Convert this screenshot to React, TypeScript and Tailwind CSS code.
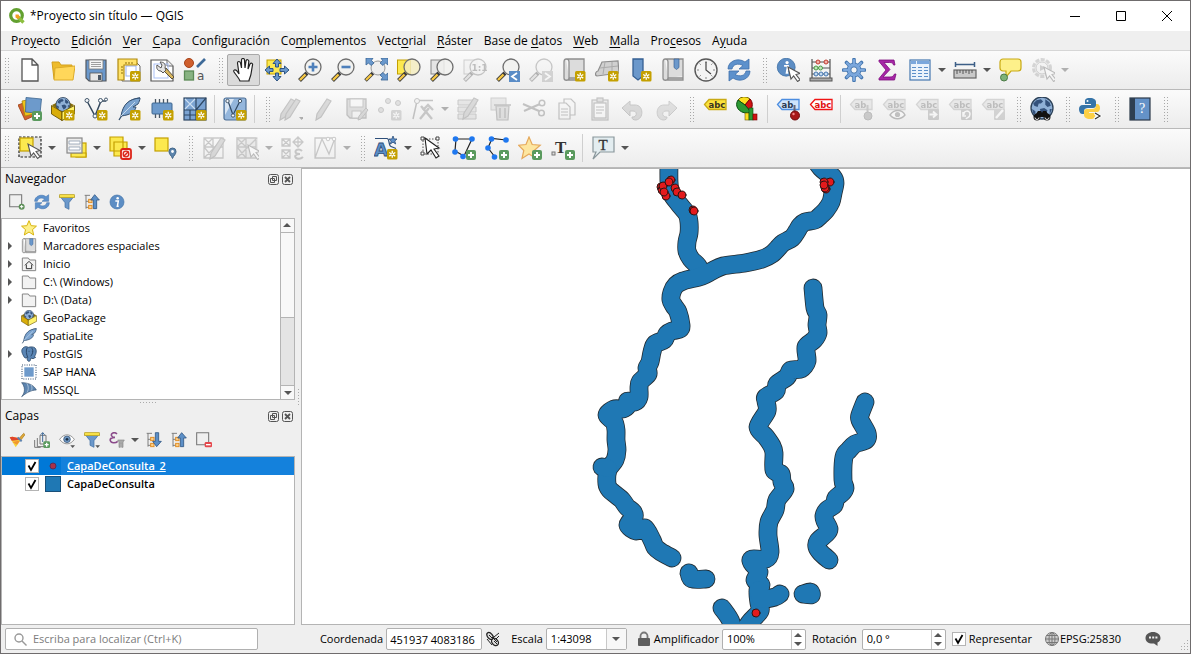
import React from "react";

type IconProps = { children: React.ReactNode; off?: boolean; size?: number };

function Icon({ children, off, size = 24 }: IconProps) {
  return (
    <svg
      width={size}
      height={size}
      viewBox="0 0 24 24"
      fill="none"
      aria-hidden="true"
      className={off ? "shrink-0 opacity-35 grayscale" : "shrink-0"}
    >
      {children}
    </svg>
  );
}

/* ---------- shared icon pieces ---------- */

const StarBadge = () => (
  <g>
    <rect x="13" y="13" width="10.500" height="10.500" rx="1.500" fill="#c4a000" />
    <path d="M18.250 14.800v7M15.200 16.500l6.100 3.600M21.300 16.500l-6.100 3.600" stroke="#fff" strokeWidth="1.300" />
    <circle cx="18.250" cy="18.300" r=".9" fill="#c4a000" />
  </g>
);

const PlusBadge = () => (
  <g>
    <rect x="14" y="14" width="10" height="10" rx="2" fill="#5a9a5e" />
    <path d="M19 16v6M16 19h6" stroke="#fff" strokeWidth="2" />
  </g>
);

const Lens = ({ children, fill = "#f1f1ef" }: { children?: React.ReactNode; fill?: string }) => (
  <g>
    <path d="M9 15L1.500 22.500" stroke="#3c3c3c" strokeWidth="4" />
    <path d="M7.500 16.500L2 22" stroke="#f7c843" strokeWidth="2.400" />
    <circle cx="15" cy="9" r="8" fill={fill} fillOpacity="0.85" stroke="#6e6e6e" strokeWidth="1.300" />
    {children}
  </g>
);

const Cursor = ({ x = 10, y = 9 }: { x?: number; y?: number }) => (
  <path
    transform={`translate(${x} ${y})`}
    d="M0 0l3 12 2.600-3 4 5.500 2.400-1.800-4-5.200 4-1z"
    fill="#fff"
    stroke="#555"
    strokeWidth="1.100"
  />
);

const Tag = ({
  text,
  fill,
  stroke,
  color,
}: {
  text: string;
  fill: string;
  stroke: string;
  color: string;
}) => (
  <g>
    <path d="M1.500 7.500L6 2.500h17v10H6z" fill={fill} stroke={stroke} strokeWidth="1.300" />
    <text x="5.500" y="10.600" fontSize="8.500" fontWeight="700" fontFamily="DejaVu Sans, sans-serif" fill={color}>
      {text}
    </text>
  </g>
);

const Globe = ({ cx, cy, r }: { cx: number; cy: number; r: number }) => (
  <g transform={`translate(${cx} ${cy}) scale(${r / 10})`}>
    <circle r="10" fill="#8fb0d6" stroke="#2d4259" strokeWidth="1.200" />
    <path
      d="M-8-4l3-3 4-1 2 2-2 2-2 0-1 3-3-1zM3-8l4 3 1 3-3 1-2-2 0-3zM-2 1l4-1 3 2-1 3-3 2-2-3zM-9 1l3 2 0 3-2-1zM7 1l2 0-2 5z"
      fill="#34527c"
    />
  </g>
);

const Refresh = () => (
  <g>
    <path d="M1 11C1 3 11-1 18 4l4-3v10h-10l4-3.500C11 5 6 6 5 11z" fill="#5d91cc" stroke="#3f70ab" strokeWidth=".8" />
    <path d="M23 13c0 8-10 12-17 7l-4 3V13h10l-4 3.500c5 2.500 10 1.500 11-3.500z" fill="#5d91cc" stroke="#3f70ab" strokeWidth=".8" />
  </g>
);

const Pencil = ({ x = 0, y = 0 }: { x?: number; y?: number }) => (
  <path
    transform={`translate(${x} ${y})`}
    d="M15 2l4 2-10 16-5 3 1-6z"
    fill="#b9a48a"
    stroke="#6b6b6b"
    strokeWidth="1.200"
  />
);

const Scroll = () => (
  <path
    d="M4 1h18v19H7M4 1c-2 0-2 2-2 3v16c0 3 5 3 5 0V4c0-2-1-3-3-3M7 20v2h15v-4"
    fill="#dcdcdc"
    stroke="#8e8e8e"
    strokeWidth="1.300"
  />
);

const VLine = () => (
  <g>
    <path d="M3 4l8 15 6-15h5" stroke="#33475c" strokeWidth="1.500" />
    <g fill="#f4f7fa" stroke="#44586c">
      <circle cx="3" cy="3.500" r="2" />
      <circle cx="16.500" cy="3.500" r="2" />
      <circle cx="22" cy="2.500" r="1.500" />
      <circle cx="11" cy="19" r="2" />
    </g>
  </g>
);

const Feather = () => (
  <g>
    <path d="M23 1C13 2 6 8 5 18l-3 5" stroke="#34506f" strokeWidth="1.300" />
    <path d="M23 1C12 2 6 7 4 19c9-1 14-4 15-9l-3 0 5-3c1-2 2-4 2-6z" fill="#7ba3cf" stroke="#34506f" strokeWidth="1" />
    <path d="M4 19L18 5" stroke="#c6d9ec" />
  </g>
);

const Package = () => (
  <g>
    <path d="M1 8l6-3h10l6 3-12 8z" fill="#8a6f08" />
    <Globe cx={12} cy={7.500} r={7} />
    <path d="M.5 8.500L11 15v8.500L.5 17z" fill="#d9ad0a" stroke="#6a5400" strokeWidth=".9" />
    <path d="M23.500 8.500L11 15v8.500L23.500 17z" fill="#fff36a" stroke="#6a5400" strokeWidth=".9" />
  </g>
);

const Bookmark = ({ x, y, s = 1 }: { x: number; y: number; s?: number }) => (
  <path
    transform={`translate(${x} ${y}) scale(${s})`}
    d="M0 0h10v17l-5 4-5-4z"
    fill="#6b98cb"
    stroke="#355f92"
    strokeWidth="1.300"
  />
);

const Funnel = () => (
  <g>
    <path d="M1 3h22l-8 10v10l-6-3v-7z" fill="#6b98cb" stroke="#3d6a9e" />
    <rect x="1" y="1" width="22" height="4.500" fill="#f7e048" stroke="#b59a12" />
  </g>
);

const Tree = ({ up }: { up: boolean }) => (
  <g>
    <path d="M1 2h8M3 2v20M3 11h6M3 20h6" stroke="#777" strokeWidth="1.400" />
    <rect x="7" y="8" width="5" height="5" fill="#fcd08a" stroke="#e08a1e" strokeWidth="1.400" />
    <rect x="7" y="17" width="5" height="5" fill="#fcd08a" stroke="#e08a1e" strokeWidth="1.400" />
    <path
      d={up ? "M16 1l7 8h-4v13h-5V9h-4z" : "M16 22l7-8h-4V1h-5v13h-4z"}
      fill="#5c8fc7"
      stroke="#2d5482"
      strokeWidth="1.200"
    />
  </g>
);

const Info = () => (
  <g>
    <circle cx="12" cy="12" r="10.500" fill="#5c8dc4" stroke="#4172a8" />
    <circle cx="13" cy="6.500" r="1.900" fill="#fff" />
    <path d="M9.500 10.500H14l-1.500 8h2" stroke="#fff" strokeWidth="2.200" />
  </g>
);

const Mesh = () => (
  <path
    d="M2 2h9v9H2zM2 2l9 9M11 2l-9 9M11 2h10v9H11zM2 11h9v11H2zM2 22L22 2M11 11h10v11H11zM2 11l9 11"
    stroke="#777"
    strokeWidth="1.300"
  />
);

/* ---------- toolbar icons ---------- */

const icons: Record<string, React.ReactNode> = {
  "Nuevo proyecto": <path d="M4 1h10l6 6v16H4zM14 1v6h6" fill="#fff" stroke="#555" strokeWidth="1.300" />,
  "Abrir proyecto": (
    <g>
      <path d="M1 4h7l2 3h11v14H3z" fill="#eebb2a" stroke="#d3a01c" />
      <path d="M4 10l20-2-2 14H3z" fill="#ffd75a" stroke="#dcab28" />
    </g>
  ),
  "Guardar proyecto": (
    <g>
      <path d="M2 2h20v21H5l-3-3z" fill="#6a98cc" stroke="#54595f" strokeWidth="1.200" />
      <rect x="5" y="2" width="14" height="9" fill="#f6f6f6" stroke="#777" strokeWidth=".8" />
      <path d="M7 4.500h10M7 6.500h10M7 8.500h10" stroke="#888" strokeWidth=".8" />
      <rect x="6" y="15" width="12" height="8" fill="#e6e6e6" stroke="#555" strokeWidth=".8" />
      <rect x="14" y="17" width="3" height="5" fill="#4a5663" />
    </g>
  ),
  "Nueva composición": (
    <g>
      <path d="M5 4h14l4 4v15H5z" fill="#fff" stroke="#666" />
      <rect x="9" y="8" width="10" height="10" fill="#fff" stroke="#9ab4f2" />
      <path d="M1 1h19v6H7v15H1z" fill="#ffe26a" stroke="#b08a10" strokeWidth="1.200" />
      <path d="M9 4v2M12 4v2M15 4v2M4 9h2M4 12h2M4 15h2" stroke="#8b6c0a" />
      <StarBadge />
    </g>
  ),
  "Administrador de composiciones": (
    <g>
      <path d="M1 2h16l6 6v15H1z" fill="#fff" stroke="#555" strokeWidth="1.200" />
      <path d="M17 2v6h6" fill="#eee" stroke="#666" />
      <rect x="4" y="6" width="14" height="14" stroke="#a9c0f5" />
      <path d="M13 12l9 9 2-2-8-9z" fill="#d8b65d" stroke="#5d513a" />
      <path d="M7 7l4 3 1-3-2-3c4 0 6 2 5 6l1 2-3 3-2-2C8 13 6 11 7 7z" fill="#e4e4e4" stroke="#555" />
    </g>
  ),
  "Administrador de estilos": (
    <g>
      <circle cx="6" cy="5" r="4.500" fill="#cf5f2d" stroke="#a6431a" />
      <path d="M22 1L14 9" stroke="#3e6a98" strokeWidth="2.600" />
      <rect x="1.500" y="13" width="9" height="9" fill="#88b382" stroke="#5c8a56" strokeWidth="1.300" />
      <text x="14" y="22" fontSize="12" fontFamily="DejaVu Sans, sans-serif" fill="#555">a</text>
    </g>
  ),
  Desplazar: (
    <path
      d="M8 23c-1-3-4-6-6-9-1-2 1-3 3-1l2 3L5.500 5c0-2 2.500-2 3 0l1 5L9.500 2c0-2 3-2 3 0l.5 8 1-7c.5-2 3-1.500 2.800.5L16 11l2-5c1-1.500 3-.8 2.500 1L19 16c-.5 3-2 5-2 7z"
      fill="#fff"
      stroke="#222"
      strokeWidth="1.200"
    />
  ),
  "Desplazar a la selección": (
    <g>
      <rect x="2" y="2" width="14" height="14" fill="#fce94f" stroke="#c4a000" />
      <path
        d="M12 1l4 4.500h-2.500v3.500h-3V5.500H8zM12 23l-4-4.500h2.500V15h3v3.500H16zM0 12l4.500-4v2.500H8v3H4.500V16zM24 12l-4.500-4v2.500H15v3h4.500V16z"
        fill="#6a98cc"
        stroke="#2d5482"
      />
    </g>
  ),
  "Acercar zum": (
    <Lens>
      <path d="M15 4.500v9M10.500 9h9" stroke="#4e80bb" strokeWidth="2.600" />
    </Lens>
  ),
  "Alejar zum": (
    <Lens>
      <path d="M10.500 9h9" stroke="#4e80bb" strokeWidth="2.600" />
    </Lens>
  ),
  "Zum general": (
    <g>
      <path d="M9 15L1.500 22.500" stroke="#3c3c3c" strokeWidth="3.600" />
      <path d="M7.500 16.500L2 22" stroke="#f7c843" strokeWidth="2.200" />
      <circle cx="14" cy="10" r="7" fill="#eee" stroke="#999" />
      <path
        d="M2 0h7L7.500 2.500 10 5 7 7.500 4.500 5 2 7zM24 0h-7l1.500 2.500L16 5l3 2.500L21.500 5 24 7zM24 22h-7l1.500-2.500L16 17l3-2.500 2.500 2.500 2.500-2z"
        fill="#6a98cc"
        stroke="#3a6494"
        strokeWidth=".8"
      />
    </g>
  ),
  "Zum a la selección": (
    <g>
      <rect x="0.500" y="2" width="13" height="14" fill="#fce94f" stroke="#c4a000" />
      <Lens fill="#f3ecc0" />
    </g>
  ),
  "Zum a la capa": (
    <g>
      <rect x="1" y="2" width="13" height="14" fill="#e4e4e4" stroke="#888" />
      <Lens />
    </g>
  ),
  "Zum a resolución nativa": (
    <g>
      <rect x="1" y="2" width="13" height="14" fill="#eee" stroke="#888" />
      <Lens>
        <text x="8.500" y="12.500" fontSize="9" fontWeight="700" fontFamily="DejaVu Sans, sans-serif" fill="#555">1:1</text>
      </Lens>
    </g>
  ),
  "Zum anterior": (
    <g>
      <Lens />
      <rect x="13" y="13" width="11" height="11" fill="#5a8cc6" />
      <path d="M21 15l-5 3.500 5 3.500" stroke="#fff" strokeWidth="1.800" />
    </g>
  ),
  "Zum siguiente": (
    <g>
      <Lens />
      <rect x="13" y="13" width="11" height="11" fill="#999" />
      <path d="M16 15l5 3.500-5 3.500" stroke="#fff" strokeWidth="1.800" />
    </g>
  ),
  "Nueva vista de mapa": (
    <g>
      <Scroll />
      <StarBadge />
    </g>
  ),
  "Nueva vista 3D": (
    <g>
      <path d="M7 4l16-1 1 12-22 3c-3-1-1-5 1-5z" fill="#d0d0d0" stroke="#8e8e8e" strokeWidth="1.200" />
      <path d="M5 10l18-2M10 4l-2 12M17 4v12" stroke="#aaa" />
      <StarBadge />
    </g>
  ),
  "Nuevo marcador espacial": (
    <g>
      <Bookmark x={5} y={1} />
      <StarBadge />
    </g>
  ),
  "Mostrar marcadores espaciales": (
    <g>
      <Scroll />
      <Bookmark x={13} y={1} s={0.5} />
    </g>
  ),
  "Controlador temporal": (
    <g>
      <circle cx="12" cy="12" r="11" fill="#f4f4f4" stroke="#585858" strokeWidth="1.400" />
      <path
        d="M12 3v2M12 19v2M3 12h2M19 12h2M5.600 5.600l1.200 1.200M17.200 17.200l1.200 1.200M5.600 18.400l1.200-1.200M17.200 6.800l1.200-1.200"
        stroke="#888"
      />
      <path d="M12 4v8l5 4" stroke="#444" strokeWidth="1.200" />
    </g>
  ),
  Actualizar: <Refresh />,
  "Identificar objetos": (
    <g>
      <g transform="translate(0 -1) scale(.85)">
        <Info />
      </g>
      <Cursor x={12} y={9} />
    </g>
  ),
  "Calculadora de campos": (
    <g>
      <path d="M3 1v20M21 1v20M3 4h18M3 10h18M3 16h18" stroke="#555" strokeWidth="1.200" />
      <rect x="1" y="20" width="22" height="3" fill="#aaa" stroke="#555" />
      <g fill="#f3b0a8" stroke="#c23b30">
        <circle cx="9" cy="4" r="2" />
        <circle cx="17" cy="4" r="2" />
      </g>
      <g fill="#c2e6bd" stroke="#4c9b45">
        <circle cx="7" cy="10" r="2" />
        <circle cx="11.500" cy="10" r="2" />
      </g>
      <g fill="#c5dbf2" stroke="#4577b0">
        <circle cx="7" cy="16" r="2" />
        <circle cx="12" cy="16" r="2" />
        <circle cx="17" cy="16" r="2" />
      </g>
    </g>
  ),
  "Caja de herramientas de procesos": (
    <g>
      <path
        d="M12 1.500v21M1.500 12h21M4.500 4.500l15 15M19.500 4.500l-15 15"
        stroke="#4577b0"
        strokeWidth="3.600"
        strokeLinecap="round"
      />
      <circle cx="12" cy="12" r="7" fill="#7ba7dc" stroke="#4577b0" />
      <path
        d="M12 2v20M2 12h20M5 5l14 14M19 5L5 19"
        stroke="#7ba7dc"
        strokeWidth="2.200"
        strokeLinecap="round"
      />
      <circle cx="12" cy="12" r="3.200" fill="#f4f4f4" stroke="#4577b0" />
    </g>
  ),
  "Resumen estadístico": (
    <path
      d="M4 2h15l1 5h-1.500c-.5-2-1.500-2.500-4-2.500H9l6 7-7 7.500h7c2.500 0 3.500-1 4.500-3H21l-1.500 6H4v-1.500L11 12 4 3.500z"
      fill="#a626a6"
      stroke="#7d0d7d"
      strokeWidth=".8"
    />
  ),
  "Abrir tabla de atributos": (
    <g>
      <rect x="2" y="2" width="20" height="20" fill="#eaf2fb" stroke="#4577b0" strokeWidth="1.200" />
      <path d="M3 4.500h5M9 4.500h12" stroke="#7ba7dc" strokeWidth="3" />
      <path d="M4 9.500h4M4 12.500h4M4 15.500h4M4 18.500h4M10 9.500h4M10 12.500h4M10 15.500h4M10 18.500h4M16 9.500h4M16 12.500h4M16 15.500h4M16 18.500h4" stroke="#5b8fca" strokeWidth="1.100" />
    </g>
  ),
  "Medir línea": (
    <g>
      <path d="M2 6.500h20M2.500 4v5M21.500 4v5" stroke="#3d5f87" strokeWidth="1.500" />
      <rect x="1" y="12" width="22" height="8" fill="#c9c9c9" stroke="#666" strokeWidth="1.200" />
      <path d="M4 12v4M7 12v3M10 12v4M13 12v3M16 12v4M19 12v3" stroke="#555" />
    </g>
  ),
  "Mostrar avisos del mapa": (
    <g>
      <path
        d="M5 1h15a3 3 0 0 1 3 3v6a3 3 0 0 1-3 3h-7l-5 6 0-6H5a3 3 0 0 1-3-3V4a3 3 0 0 1 3-3z"
        fill="#fdf08a"
        stroke="#c9aa15"
        strokeWidth="1.200"
      />
      <circle cx="6" cy="19.500" r="3.500" fill="#7fb379" stroke="#4b7a46" />
    </g>
  ),
  "Ejecutar acción del objeto": (
    <g>
      <circle cx="11" cy="10" r="8.500" fill="#ddd" stroke="#999" strokeWidth="3" strokeDasharray="4 1.500" />
      <circle cx="11" cy="10" r="6" fill="#f0f0f0" stroke="#888" />
      <path d="M9 7l6 3-6 3z" fill="#888" />
      <Cursor x={13} y={9} />
    </g>
  ),
  "Administrador de fuentes de datos": (
    <g>
      <path d="M0 8l7 15 11-5L8 5z" fill="#d2622d" stroke="#9b3d12" strokeWidth=".8" />
      <path d="M4 4l3 15 13-3L9 3z" fill="#f0c419" stroke="#a8870c" strokeWidth=".8" />
      <path d="M8 .5l15.500 1.500-1.500 14.500L7.500 15z" fill="#6d9acb" stroke="#3e668f" strokeWidth=".8" />
      <PlusBadge />
    </g>
  ),
  "Nueva capa GeoPackage": (
    <g>
      <Package />
      <StarBadge />
    </g>
  ),
  "Nueva capa de archivo shape": (
    <g>
      <VLine />
      <StarBadge />
    </g>
  ),
  "Nueva capa SpatiaLite": (
    <g>
      <Feather />
      <StarBadge />
    </g>
  ),
  "Nueva capa borrador temporal": (
    <g>
      <path d="M5.500 2v19M9.500 2v19M13.500 2v19M17.500 2v19" stroke="#4a5663" strokeWidth="1.300" />
      <rect x="2" y="6" width="20" height="11" rx="1" fill="#6d9acb" stroke="#3e668f" />
      <StarBadge />
    </g>
  ),
  "Nueva capa de malla": (
    <g>
      <rect x="1" y="1" width="22" height="22" fill="#7ba3d2" stroke="#2f4864" strokeWidth="1.200" />
      <path d="M1 13h22M13 1v22M13 13L23 1M7 13v10M1 18h12" stroke="#2f4864" strokeWidth="1.200" />
      <path d="M2 2l10 10M12 2L2 12" stroke="#cddff2" strokeWidth="1.100" />
      <StarBadge />
    </g>
  ),
  "Nueva capa virtual": (
    <g>
      <rect x="1" y="1" width="22" height="22" rx="2" fill="#94b6dc" stroke="#4d6f96" strokeWidth="1.200" />
      <path d="M2 2h9L2 18z" fill="#d9e6f4" />
      <path d="M5 4l5 14 7-14" stroke="#2f4864" strokeWidth="1.200" />
      <g fill="#f4f7fa" stroke="#44586c">
        <circle cx="4.500" cy="4" r="1.700" />
        <circle cx="17" cy="4" r="1.700" />
        <circle cx="10" cy="18.500" r="1.700" />
      </g>
      <StarBadge />
    </g>
  ),
  "Ediciones actuales": (
    <g>
      <Pencil x={-3} />
      <Pencil x={2} />
      <path d="M20 20h5l-2.500 3z" fill="#333" />
    </g>
  ),
  "Conmutar edición": <Pencil />,
  "Guardar cambios de la capa": (
    <g>
      <path d="M2 2h19v19H5l-3-3z" fill="#b5b5b5" stroke="#666" strokeWidth="1.300" />
      <rect x="5" y="2" width="13" height="8" fill="#f6f6f6" stroke="#777" />
      <rect x="7" y="14" width="9" height="7" fill="#f0f0f0" stroke="#777" />
      <path d="M21 11l2 2-7 9-3 1 1-4z" fill="#b9a48a" stroke="#666" />
    </g>
  ),
  "Añadir punto": (
    <g>
      <circle cx="10" cy="4" r="2.500" fill="#bbb" stroke="#777" />
      <circle cx="3" cy="13" r="2.500" fill="#bbb" stroke="#777" />
      <circle cx="20" cy="6" r="2.500" fill="#bbb" stroke="#777" />
      <StarBadge />
    </g>
  ),
  "Herramienta de vértices": (
    <g>
      <path d="M2 22L6 4M6 3.500h16" stroke="#666" strokeWidth="1.500" />
      <circle cx="6" cy="4" r="2.500" fill="#eee" stroke="#666" />
      <path d="M10 9l11 13M18 11L9 22" stroke="#777" strokeWidth="2.400" />
      <path d="M12 13l5-5 5 5" stroke="#777" strokeWidth="2.400" />
    </g>
  ),
  "Modificar atributos": (
    <g>
      <path d="M2 3h18v5H2zM2 10h18v5H2zM2 17h18v5H2z" fill="#c8cfae" stroke="#777" />
      <Pencil x={3} y={-1} />
    </g>
  ),
  "Borrar lo seleccionado": (
    <g>
      <rect x="2" y="1" width="15" height="12" fill="#d0d0b0" stroke="#888" />
      <path d="M7 9h13l-1 14H8z" fill="#d8b0b0" stroke="#8b5b5b" strokeWidth="1.200" />
      <path d="M5 8h17M11 11v10M16 11v10" stroke="#8b5b5b" strokeWidth="1.500" />
    </g>
  ),
  "Cortar objetos": (
    <g>
      <path d="M1 7l16 7M2 14l16-7" stroke="#666" strokeWidth="2" />
      <circle cx="20" cy="6" r="2.800" stroke="#666" strokeWidth="1.500" />
      <circle cx="19.500" cy="16" r="2.800" stroke="#666" strokeWidth="1.500" />
    </g>
  ),
  "Copiar objetos": (
    <g fill="#f5f5f5" stroke="#666" strokeWidth="1.200">
      <path d="M9 2h7l4 4v12H9z" />
      <path d="M4 6h7l4 4v12H4z" />
      <path d="M6 12h7M6 15h7M6 18h7" />
    </g>
  ),
  "Pegar objetos": (
    <g stroke="#666" strokeWidth="1.200">
      <rect x="4" y="3" width="16" height="20" fill="#d9d9d9" />
      <rect x="6" y="6" width="12" height="15" fill="#fafafa" />
      <rect x="9" y="1" width="6" height="4" fill="#bbb" />
      <path d="M8 10h8M8 13h8M8 16h6" />
    </g>
  ),
  Deshacer: (
    <path d="M9 4v4h5c9 0 9 14 1 15-3 0-4-1-4-3 5 1 6-6 1-6H9v5L1 11z" fill="#b7a6a0" stroke="#7d6f6a" />
  ),
  Rehacer: (
    <path d="M15 4v4h-5c-9 0-9 14-1 15 3 0 4-1 4-3-5 1-6-6-1-6h3v5l8-8z" fill="#b3b9b0" stroke="#7c857a" />
  ),
  "Opciones de etiquetado": <Tag text="abc" fill="#fbe23c" stroke="#c9aa15" color="#3a3320" />,
  "Opciones de diagrama": (
    <g>
      <path d="M9 8L2 3a8 8 0 0 1 12-1z" fill="#fce020" stroke="#6b5d00" />
      <path d="M9 8l5-6c3 3 3 8 0 12z" fill="#d11313" stroke="#700" />
      <path d="M9 8L2 3c-4 6 1 13 9 13 1 0 3-1 3-2z" fill="#2c9a34" stroke="#0a4f10" />
      <rect x="9" y="16" width="4" height="7" fill="#fce020" stroke="#6b5d00" strokeWidth=".6" />
      <rect x="13" y="11" width="4" height="12" fill="#2c9a34" stroke="#0a4f10" strokeWidth=".6" />
      <rect x="17" y="17" width="4" height="6" fill="#d11313" stroke="#700" strokeWidth=".6" />
    </g>
  ),
  "Resaltar etiquetas fijadas": (
    <g>
      <Tag text="ab" fill="#cfe4fb" stroke="#4c8de0" color="#2b3950" />
      <path d="M18.500 8v10" stroke="#667" strokeWidth="2" />
      <circle cx="19" cy="18.500" r="4.500" fill="#a81818" stroke="#700c0c" />
      <circle cx="17.500" cy="17" r="1.200" fill="#e88" />
    </g>
  ),
  "Conmutar etiquetas no ubicadas": <Tag text="abc" fill="#fff" stroke="#f01414" color="#e01010" />,
  "Fijar etiquetas": (
    <g>
      <Tag text="ab" fill="#d6d2b0" stroke="#999" color="#555" />
      <path d="M18.500 8v10" stroke="#777" strokeWidth="2" />
      <circle cx="19" cy="19" r="4" fill="#a77" stroke="#755" />
    </g>
  ),
  "Mostrar etiquetas": (
    <g>
      <Tag text="abc" fill="#d6d2b0" stroke="#999" color="#555" />
      <path d="M8 18c4-6 12-6 15 0-4 5-11 5-15 0z" fill="#fff" stroke="#555" strokeWidth="1.400" />
      <circle cx="15.500" cy="17.500" r="2.600" fill="#666" />
    </g>
  ),
  "Mover etiqueta": (
    <g>
      <Tag text="abc" fill="#d6d2b0" stroke="#999" color="#555" />
      <rect x="13" y="12" width="11" height="11" rx="1" fill="#888" />
      <path d="M14.500 17.500h6M18 14.500l3.500 3-3.500 3" stroke="#fff" strokeWidth="1.800" />
    </g>
  ),
  "Rotar etiqueta": (
    <g>
      <Tag text="abc" fill="#d6d2b0" stroke="#999" color="#555" />
      <rect x="13" y="12" width="11" height="11" rx="1" fill="#888" />
      <path d="M16 18c-1-5 6-5 6-1s-3 3-4 5M15 15v4h3" stroke="#fff" strokeWidth="1.500" />
    </g>
  ),
  "Cambiar propiedades de etiqueta": (
    <g>
      <Tag text="abc" fill="#d6d2b0" stroke="#999" color="#555" />
      <rect x="13" y="12" width="11" height="11" rx="1" fill="#999" />
      <path d="M15 21l7-8" stroke="#fff" strokeWidth="2.400" />
    </g>
  ),
  "Buscar con MetaSearch": (
    <g>
      <Globe cx={12} cy={11} r={11} />
      <path d="M4 20l4-6h3l1 2 1-2h3l4 6z" fill="#111" />
      <circle cx="7" cy="20" r="3.500" fill="#111" />
      <circle cx="17" cy="20" r="3.500" fill="#111" />
      <path d="M5 20.500a2 2 0 0 0 4 0M15 20.500a2 2 0 0 0 4 0" stroke="#ddd" />
    </g>
  ),
  "Consola de Python": (
    <g>
      <path d="M11 1c-5 0-5 2-5 4v2h6v1H4C1 8 0 10 0 12s1 5 3 5h2v-3c0-2 2-3 4-3h5c2 0 3-1 3-3V5c0-2-2-4-6-4z" fill="#3674a8" />
      <circle cx="8.500" cy="4" r="1" fill="#fff" />
      <path d="M11 22c5 0 5-2 5-4v-2h-6v-1h8c2 0 3-2 3-4s-1-4-3-4h-1v2c0 2-2 3-4 3H8c-2 0-3 1-3 3v3c0 2 2 4 6 4z" fill="#fdd046" />
      <path d="M15.500 16l5.500 3-5.500 3" stroke="#fff" strokeWidth="2.600" />
      <path d="M16 16l5 3-5 3" stroke="#333" strokeWidth="1.200" />
    </g>
  ),
  "Contenido de la ayuda": (
    <g>
      <rect x="2" y="1" width="20" height="22" fill="#6492c8" stroke="#2c3a4a" strokeWidth="1.200" />
      <rect x="2" y="1" width="5" height="22" fill="#2e3f52" />
      <text x="11" y="16" fontSize="14" fontFamily="Liberation Serif, serif" fill="#fff">?</text>
    </g>
  ),
  "Seleccionar objetos": (
    <g>
      <rect x="1" y="1" width="22" height="20" fill="#e2e2e2" stroke="#222" strokeWidth="1.200" strokeDasharray="2.500 1.500" />
      <rect x="2" y="2" width="13" height="13" fill="#fce94f" stroke="#c4a000" strokeWidth="1.200" />
      <Cursor x={10} y={8} />
    </g>
  ),
  "Seleccionar por valor": (
    <g>
      <rect x="13" y="7" width="10" height="14" fill="#fce94f" stroke="#c4a000" strokeWidth="1.200" />
      <path d="M13 17h10v4H8v-4z" fill="#fce94f" stroke="#c4a000" strokeWidth="1.200" />
      <rect x="4" y="2" width="15" height="15" fill="#ececec" stroke="#888" strokeWidth="1.200" />
      <path d="M6 5h11v3H6zM6 11h11v3H6z" fill="#fff" stroke="#9aa7b8" strokeWidth=".9" />
    </g>
  ),
  "Deseleccionar objetos": (
    <g>
      <path d="M2 1h13v14H2zM6 6h13v14H6z" fill="#fce94f" stroke="#c4a000" strokeWidth="1.200" />
      <rect x="13" y="13" width="10" height="10" rx="2" fill="#fbe3e1" stroke="#dc2418" strokeWidth="1.800" />
      <circle cx="18" cy="18" r="2.800" stroke="#dc2418" strokeWidth="1.300" />
      <path d="M15.500 20.500l5-5" stroke="#dc2418" strokeWidth="1.500" />
    </g>
  ),
  "Seleccionar por localización": (
    <g>
      <rect x="2" y="2" width="13" height="13" fill="#fce94f" stroke="#c4a000" strokeWidth="1.200" />
      <path d="M19.500 22.500c-1-3-3.500-4-3.500-7a3.500 3.500 0 0 1 7 0c0 3-2.500 4-3.500 7z" fill="#5d85ad" stroke="#3f6488" />
      <circle cx="19.500" cy="15.500" r="1.400" fill="#fff" />
    </g>
  ),
  "Editar malla": (
    <g>
      <Mesh />
      <Pencil x={4} />
    </g>
  ),
  "Seleccionar elementos de malla": (
    <g>
      <rect x="1" y="1" width="22" height="20" fill="#d8d8b0" />
      <Mesh />
      <Cursor x={13} y={9} />
    </g>
  ),
  "Transformar vértices de malla": (
    <g stroke="#777" strokeWidth="1.300">
      <path d="M2 3h8v7H2zM2 3l8 7M10 3l-8 7M2 14h8v8H2zM2 14l8 8M10 14l-8 8M18 1l5 5-5 5-5-5zM13 6h10M18 1v10" />
      <path d="M22 15c-3-3-8-1-6 2 1 1 3 1 4 1-4 0-6 2-4 4 2 1 5 1 7-1" strokeWidth="2" />
    </g>
  ),
  "Forzar por líneas": (
    <g>
      <path d="M2 2h20v20H2zM2 22l7-19 7 15 6-16M16 18l-7-15" stroke="#777" strokeWidth="1.300" />
      <circle cx="15" cy="3" r="1.800" fill="#fff" stroke="#777" />
      <circle cx="21" cy="3" r="1.800" fill="#fff" stroke="#777" />
    </g>
  ),
  "Nueva capa de anotaciones": (
    <g>
      <text x="0" y="20" fontSize="18" fontWeight="700" fontFamily="DejaVu Sans, sans-serif" fill="#5d8fc8" stroke="#2d4f7a" strokeWidth=".8">A</text>
      <path d="M1 2.500h12c3 0 1 7 4 8l5 2" stroke="#2d4f7a" strokeWidth="1.200" />
      <path d="M19 0l1.200 3H23l-2.200 2 .9 3L19 6.200 16.300 8l.9-3L15 3h2.800z" fill="#5d8fc8" stroke="#2d4f7a" strokeWidth=".8" />
      <StarBadge />
    </g>
  ),
  "Modificar anotaciones": (
    <g>
      <rect x="4" y="3" width="15" height="15" stroke="#555" strokeDasharray="1.500 1.500" />
      <path d="M2 1h3v3H2zM17 1h3v3h-3zM2 16h3v3H2z" fill="#fff" stroke="#444" />
      <path d="M6 2l2 16 4-4 5 8 3-2-5-7 5-1z" fill="#fff" stroke="#222" strokeWidth="1.100" />
    </g>
  ),
  "Anotación poligonal": (
    <g>
      <path d="M4 3h16L12 20 3 15z" stroke="#222" strokeWidth="1.200" />
      <g fill="#1f78f0">
        <circle cx="3.500" cy="3" r="2.800" />
        <circle cx="20" cy="3" r="2.800" />
        <circle cx="3" cy="16" r="2.800" />
        <circle cx="11" cy="20.500" r="2.800" />
      </g>
      <PlusBadge />
    </g>
  ),
  "Anotación lineal": (
    <g>
      <path d="M21 4L7 2.500 3 12l7 9" stroke="#222" strokeWidth="1.200" />
      <g fill="#1f78f0">
        <circle cx="6.500" cy="3" r="2.800" />
        <circle cx="21" cy="4" r="2.800" />
        <circle cx="3" cy="12" r="2.800" />
        <circle cx="9.500" cy="21" r="2.800" />
      </g>
      <PlusBadge />
    </g>
  ),
  "Anotación de marcador": (
    <g>
      <path d="M11 1l3.200 7.500 8 .7-6 5.300 1.800 8L11 18l-7 4.500 1.800-8-5.300-5.300 7.500-.7z" fill="#fde6a0" stroke="#e5a85a" strokeWidth="1.200" />
      <PlusBadge />
    </g>
  ),
  "Anotación de texto": (
    <g>
      <text x="4" y="17" fontSize="17" fontWeight="700" fontFamily="Liberation Serif, serif" fill="#333">T</text>
      <rect x="1" y="16" width="3" height="3" fill="#ddd" stroke="#777" />
      <PlusBadge />
    </g>
  ),
  "Anotación con formulario": (
    <g>
      <path d="M2 1h21v15H9l-7 7 3-7H2z" fill="#e3edf0" stroke="#8a979c" strokeWidth="1.200" />
      <text x="7.500" y="13.500" fontSize="15" fontFamily="Liberation Serif, serif" fill="#333" stroke="#333" strokeWidth=".3">T</text>
    </g>
  ),
};

/* ---------- toolbar contents ---------- */

type Item = { k: "b" | "off" | "on" | "grip" | "sep" | "arr" | "arrOff"; n?: string };
const b = (n: string): Item => ({ k: "b", n });
const off = (n: string): Item => ({ k: "off", n });
const grip: Item = { k: "grip" };
const sep: Item = { k: "sep" };
const arr: Item = { k: "arr" };
const arrOff: Item = { k: "arrOff" };

const rows: Item[][] = [
  [
    b("Nuevo proyecto"), b("Abrir proyecto"), b("Guardar proyecto"), b("Nueva composición"),
    b("Administrador de composiciones"), b("Administrador de estilos"), grip,
    { k: "on", n: "Desplazar" }, b("Desplazar a la selección"), b("Acercar zum"), b("Alejar zum"),
    b("Zum general"), b("Zum a la selección"), b("Zum a la capa"), off("Zum a resolución nativa"),
    b("Zum anterior"), off("Zum siguiente"), b("Nueva vista de mapa"), b("Nueva vista 3D"),
    b("Nuevo marcador espacial"), b("Mostrar marcadores espaciales"), b("Controlador temporal"),
    b("Actualizar"), grip, b("Identificar objetos"), b("Calculadora de campos"),
    b("Caja de herramientas de procesos"), b("Resumen estadístico"), b("Abrir tabla de atributos"), arr,
    b("Medir línea"), arr, b("Mostrar avisos del mapa"), off("Ejecutar acción del objeto"), arrOff,
  ],
  [
    b("Administrador de fuentes de datos"), b("Nueva capa GeoPackage"), b("Nueva capa de archivo shape"),
    b("Nueva capa SpatiaLite"), b("Nueva capa borrador temporal"), b("Nueva capa de malla"), sep,
    b("Nueva capa virtual"), sep, grip, off("Ediciones actuales"), off("Conmutar edición"),
    off("Guardar cambios de la capa"), off("Añadir punto"), off("Herramienta de vértices"), arrOff,
    off("Modificar atributos"), off("Borrar lo seleccionado"), off("Cortar objetos"), off("Copiar objetos"),
    off("Pegar objetos"), off("Deshacer"), off("Rehacer"), grip, b("Opciones de etiquetado"),
    b("Opciones de diagrama"), sep, b("Resaltar etiquetas fijadas"), b("Conmutar etiquetas no ubicadas"), sep,
    off("Fijar etiquetas"), off("Mostrar etiquetas"), off("Mover etiqueta"), off("Rotar etiqueta"),
    off("Cambiar propiedades de etiqueta"), grip, b("Buscar con MetaSearch"), grip, b("Consola de Python"),
    grip, b("Contenido de la ayuda"), grip,
  ],
  [
    b("Seleccionar objetos"), arr, b("Seleccionar por valor"), arr, b("Deseleccionar objetos"), arr,
    b("Seleccionar por localización"), grip, off("Editar malla"), off("Seleccionar elementos de malla"), arrOff,
    off("Transformar vértices de malla"), off("Forzar por líneas"), arrOff, grip,
    b("Nueva capa de anotaciones"), arr, b("Modificar anotaciones"), b("Anotación poligonal"),
    b("Anotación lineal"), b("Anotación de marcador"), b("Anotación de texto"), sep,
    b("Anotación con formulario"), arr,
  ],
];

const Grip = ({ first }: { first?: boolean }) => (
  <span className={first ? "flex w-3 shrink-0 justify-center" : "flex w-4 shrink-0 justify-center pl-1"}>
    <svg width="4" height="27" aria-hidden="true">
      <path d="M.5 1v26M3.500 1v26" stroke="#a8a8a8" strokeDasharray="1 2" />
    </svg>
  </span>
);

const Arrow = ({ dim }: { dim?: boolean }) => (
  <svg width="8" height="4" viewBox="0 0 8 4" aria-hidden="true">
    <path d="M0 0h8L4 4z" fill={dim ? "#b0b0b0" : "#555"} />
  </svg>
);

function Toolbar({ items }: { items: Item[] }) {
  return (
    <div
      role="toolbar"
      className="flex h-[39px] shrink-0 items-center overflow-hidden border-b border-[#b9b9b9] bg-gradient-to-b from-[#fbfbfb] to-[#ececec]"
    >
      <Grip first />
      {items.map((it, i) => {
        if (it.k === "grip") return <Grip key={i} />;
        if (it.k === "sep")
          return (
            <span key={i} className="flex w-[7px] shrink-0 justify-center">
              <span className="h-7 w-px bg-[#cfcfcf]" />
            </span>
          );
        if (it.k === "arr" || it.k === "arrOff")
          return (
            <button key={i} aria-label="Más opciones" className="flex h-8 w-3 shrink-0 items-center justify-center">
              <Arrow dim={it.k === "arrOff"} />
            </button>
          );
        return (
          <button
            key={i}
            title={it.n}
            aria-label={it.n}
            disabled={it.k === "off"}
            className={
              it.k === "on"
                ? "flex h-8 w-[33px] shrink-0 items-center justify-center rounded-xs border border-[#a9a9a9] bg-[#dadada]"
                : "flex h-8 w-[33px] shrink-0 items-center justify-center"
            }
          >
            <Icon off={it.k === "off"}>{icons[it.n as string]}</Icon>
          </button>
        );
      })}
    </div>
  );
}

/* ---------- menu ---------- */

const menus: [string, string, string][] = [
  ["Pro", "y", "ecto"], ["", "E", "dición"], ["", "V", "er"], ["", "C", "apa"], ["Confi", "g", "uración"],
  ["Co", "m", "plementos"], ["Vect", "o", "rial"], ["", "R", "áster"], ["Base de ", "d", "atos"],
  ["", "W", "eb"], ["", "M", "alla"], ["Pro", "c", "esos"], ["A", "y", "uda"],
];

/* ---------- panels ---------- */

const Folder = ({ home }: { home?: boolean }) => (
  <g>
    <path d="M2 3h9l2 3h9v16H2z" fill="#f2f2f2" stroke="#858585" strokeWidth="1.500" />
    {home && <path d="M6 14l6-6 6 6M8 13v6h8v-6" stroke="#333" strokeWidth="1.500" />}
  </g>
);

const tree: { name: string; open?: boolean; icon: React.ReactNode }[] = [
  { name: "Favoritos", icon: <path d="M12 1l3.200 7.500 8 .7-6 5.300 1.800 8L12 18l-7 4.500 1.800-8L.8 9.200l8-.7z" fill="#fdf08a" stroke="#d8b40c" strokeWidth="1.500" /> },
  { name: "Marcadores espaciales", open: true, icon: <g><Scroll /><Bookmark x={13} y={1} s={0.5} /></g> },
  { name: "Inicio", open: true, icon: <Folder home /> },
  { name: "C:\\ (Windows)", open: true, icon: <Folder /> },
  { name: "D:\\ (Data)", open: true, icon: <Folder /> },
  { name: "GeoPackage", icon: <Package /> },
  { name: "SpatiaLite", icon: <Feather /> },
  {
    name: "PostGIS",
    open: true,
    icon: (
      <g>
        <path d="M3 3c3-3 6-2 8-1 3-1 8-1 10 1 3 3 2 9-1 13l2 1-4 2-3-1c-1 3-1 5-3 5s-3-2-3-6c-2 2-4 1-5-2C1 10 0 6 3 3z" fill="#5b86b5" stroke="#2e4d6e" strokeWidth="1.300" />
        <path d="M9 3C7 7 8 12 10 17M16 3c3 3 2 8-1 12M12 8h.1M17 8h.1" stroke="#243f5e" strokeWidth="1.300" strokeLinecap="round" />
      </g>
    ),
  },
  {
    name: "SAP HANA",
    icon: (
      <g>
        <rect x="1.500" y="1.500" width="21" height="21" stroke="#34506f" strokeWidth="1.600" strokeDasharray="1.500 2" />
        <rect x="5" y="5" width="14" height="14" fill="#6d9acb" />
      </g>
    ),
  },
  {
    name: "MSSQL",
    icon: (
      <g>
        <path d="M1 1c9 0 18 3 22 11C15 12 7 17 1 22 7 15 6 7 1 1z" fill="#5d85b0" stroke="#33506f" />
        <path d="M9 2c3 6 2 10 0 14M15 4c2 4 2 7 0 9" stroke="#cbdcec" />
      </g>
    ),
  },
];

function DockTitle({ title }: { title: string }) {
  return (
    <div className="flex h-[22px] shrink-0 items-center pr-[2px] pl-1">
      <h2 className="flex-1 text-[12px] leading-4">{title}</h2>
      <span className="flex gap-[3px]">
        <button aria-label={`Desacoplar ${title}`}>
          <svg width="11" height="11" fill="none" stroke="#555">
            <rect x=".5" y=".5" width="10" height="10" rx="2" />
            <path d="M4.500 2.500h4v4h-4zM2.500 4.500h4v4h-4z" />
          </svg>
        </button>
        <button aria-label={`Cerrar ${title}`}>
          <svg width="11" height="11" fill="none" stroke="#555">
            <rect x=".5" y=".5" width="10" height="10" rx="2" />
            <path d="M3 3l5 5M8 3L3 8" strokeWidth="1.800" />
          </svg>
        </button>
      </span>
    </div>
  );
}

const PanelButton = ({ label, children }: { label: string; children: React.ReactNode }) => (
  <button aria-label={label} title={label} className="flex h-6 w-[25px] items-center justify-center">
    <Icon size={16}>{children}</Icon>
  </button>
);

const Check = ({ id }: { id: string }) => (
  <span className="relative flex size-[14px] shrink-0">
    <input id={id} type="checkbox" defaultChecked className="peer size-[14px] appearance-none border border-[#b4b4b4] bg-white" />
    <svg viewBox="0 0 14 14" className="pointer-events-none absolute inset-0 hidden peer-checked:block">
      <path d="M3.500 6.500l2.500 4.500L10.500 3" fill="none" stroke="#000" strokeWidth="1.800" />
    </svg>
  </span>
);

/* ---------- map ---------- */

const rivers = [
  "669,160 669,182 671,193 679,204 687,214 689,222 689,233 687,242 687,251 691,259 698,266 702,274",
  "815,160 821,168 827,173 833,177 835,183 833,193 831,202 826,210 821,215 815,220 805,222 800,226 797,231 792,238 783,243 779,247 772,254 762,259 745,263 723,266 712,271 702,276 683,281 676,285 672,292 671,300 674,306 678,312 681,325 680,329 672,331 667,334 664,340 655,344 652,352 650,362 647,368 648,374 640,382 639,388 639,397 635,402 628,401 628,405 623,409 614,409 607,415 614,422 616,430 616,440 617,450 615,460 608,470 607,484 610,490 616,495 622,500 627,507 633,512 634,517 628,525 636,531 645,528 652,540 655,547 661,552 672,558",
  "602,467 608,468",
  "689,573 692,579 706,579",
  "722,608 731,622 731,640",
  "813,288 815,308 818,315 817,325 818,333 814,340 806,347 807,361 801,369 791,370 787,377 777,384 776,391 766,397 766,401 767,411 758,427 766,437 772,446 774,453 774,470 781,474 782,482 785,489 777,500 775,510 769,522 768,535 770,552 766,559 752,559 752,563 759,572 755,580 761,585 758,593 759,603 760,611 750,622 742,634",
  "758,590 762,599 775,597 780,594",
  "803,594 810,592 811,595 803,594",
  "865,402 860,415 860,420 867,433 866,440 855,444 849,450 844,457 843,480 845,488 842,493 836,498 834,505 827,510 824,516 825,521 829,529 826,534 818,541 817,547 821,553 829,560",
];

/* Catmull-Rom curve through every vertex */
function smooth(list: string) {
  const p = list.split(" ").map((s) => s.split(",").map(Number));
  let d = `M${p[0][0]} ${p[0][1]}`;
  for (let i = 0; i < p.length - 1; i++) {
    const a = p[Math.max(i - 1, 0)];
    const q = p[i];
    const r = p[i + 1];
    const z = p[Math.min(i + 2, p.length - 1)];
    d += `C${q[0] + (r[0] - a[0]) / 7} ${q[1] + (r[1] - a[1]) / 7} ${r[0] - (z[0] - q[0]) / 7} ${r[1] - (z[1] - q[1]) / 7} ${r[0]} ${r[1]}`;
  }
  return d;
}

const courses = rivers.map(smooth);

const points: [number, number][] = [
  [671, 180], [661, 187], [662, 190], [666, 196], [663, 186], [664, 192], [669, 182],
  [675, 188], [677, 192], [682, 195], [693, 210], [694, 211],
  [830, 182], [826, 189], [825, 188], [824, 182], [824, 185], [756, 613],
];

function MapCanvas() {
  return (
    <svg className="block h-full w-full" role="img" aria-label="Mapa">
      <g transform="translate(-302 -169)" fill="none" strokeLinecap="round" strokeLinejoin="round">
        {courses.map((d) => <path key={d} d={d} stroke="#232b30" strokeWidth="18.800" />)}
        {courses.map((d) => <path key={d} d={d} stroke="#1f78b4" strokeWidth="17.200" />)}
        {points.map(([x, y], i) => (
          <circle key={i} cx={x} cy={y} r="4" fill="#e31a1c" stroke="#2c1414" />
        ))}
      </g>
    </svg>
  );
}

/* ---------- status bar ---------- */

function Spin({ id, value }: { id: string; value: string }) {
  return (
    <span className="flex h-[21px] w-[84px] rounded-xs border border-[#b0b0b0] bg-white">
      <input id={id} defaultValue={value} className="w-0 flex-1 px-1 text-[11px] outline-none" />
      <span className="flex w-[14px] flex-col items-center justify-center gap-[5px] border-l border-[#c8c8c8]">
        <button aria-label="Aumentar" className="rotate-180"><Arrow /></button>
        <button aria-label="Disminuir"><Arrow /></button>
      </span>
    </span>
  );
}

export default function App() {
  return (
    <div className="flex h-screen flex-col overflow-hidden border border-[#6f6c6d] bg-[#efefef] font-['Open_Sans','Noto_Sans',sans-serif] text-[11px] text-black">
      <header className="flex h-[30px] shrink-0 items-center bg-white pl-2">
        <svg width="16" height="16" viewBox="0 0 16 16" fill="none" aria-hidden="true">
          <circle cx="7.500" cy="7.500" r="5.800" stroke="#62a030" strokeWidth="3.200" />
          <path d="M9 9l5.500 5.500" stroke="#8cbf3f" strokeWidth="3.400" />
          <path d="M6.500 6.500h3l1.500 3-2 1.500-2.500-1.500z" fill="#f0a020" />
        </svg>
        <h1 className="flex-1 pl-[5px] text-[12px]">*Proyecto sin título — QGIS</h1>
        <button aria-label="Minimizar" className="flex h-full w-[46px] items-center justify-center">
          <svg width="10" height="10"><path d="M0 5.500h10" stroke="#000" /></svg>
        </button>
        <button aria-label="Maximizar" className="flex h-full w-[46px] items-center justify-center">
          <svg width="10" height="10"><path d="M.5.5h9v9h-9z" fill="none" stroke="#000" /></svg>
        </button>
        <button aria-label="Cerrar" className="flex h-full w-[46px] items-center justify-center">
          <svg width="10" height="10"><path d="M0 0l10 10M10 0L0 10" stroke="#000" /></svg>
        </button>
      </header>

      <nav className="flex h-5 shrink-0 items-center gap-[11px] border-b border-[#d6d6d6] pl-[10px] text-[12px]">
        {menus.map(([a, u, z]) => (
          <button key={a + u + z} className="whitespace-pre leading-4">
            {a}<span className="underline underline-offset-2">{u}</span>{z}
          </button>
        ))}
      </nav>

      {rows.map((r, i) => <Toolbar key={i} items={r} />)}

      <main className="flex min-h-0 flex-1">
        <aside className="flex w-[294px] shrink-0 flex-col">
          <section className="flex shrink-0 flex-col">
            <DockTitle title="Navegador" />
            <div className="flex h-7 items-center pb-1 pl-[3px]">
              <PanelButton label="Añadir capas seleccionadas">
                <g>
                  <path d="M1 1h18v18H1z" stroke="#777" strokeWidth="1.600" />
                  <circle cx="19" cy="19" r="4.500" fill="#5c8f57" />
                  <path d="M16.500 19h5M19 16.500v5" stroke="#fff" strokeWidth="1.500" />
                </g>
              </PanelButton>
              <PanelButton label="Actualizar"><Refresh /></PanelButton>
              <PanelButton label="Filtrar explorador"><Funnel /></PanelButton>
              <PanelButton label="Contraer todo"><Tree up /></PanelButton>
              <PanelButton label="Propiedades"><Info /></PanelButton>
            </div>
            <div className="flex h-[182px] border border-[#b4b4b4] bg-white">
              <ul className="flex-1 overflow-hidden">
                {tree.map((t) => (
                  <li key={t.name} className="flex h-[18px] items-center">
                    <span className="flex w-[19px] justify-center pr-1">
                      {t.open && (
                        <svg width="4" height="8"><path d="M0 0l4 4-4 4z" fill="#555" /></svg>
                      )}
                    </span>
                    <Icon size={16}>{t.icon}</Icon>
                    <span className="pl-[6px]">{t.name}</span>
                  </li>
                ))}
              </ul>
              <div className="flex w-[14px] flex-col border-l border-[#b4b4b4] bg-[#e4e4e4]">
                <button aria-label="Subir" className="flex h-[14px] rotate-180 items-center justify-center border-t border-[#b4b4b4] bg-[#f8f8f8]"><Arrow /></button>
                <div className="h-[85px] border-b border-[#b4b4b4] bg-[#f8f8f8]" />
                <div className="flex-1" />
                <button aria-label="Bajar" className="flex h-[14px] items-center justify-center border-t border-[#b4b4b4] bg-[#f8f8f8]"><Arrow /></button>
              </div>
            </div>
          </section>
          <div className="flex h-[5px] shrink-0 items-center justify-center">
            <svg width="16" height="1"><path d="M0 .5h16" stroke="#aaa" strokeDasharray="1 2" /></svg>
          </div>
          <section className="flex min-h-0 flex-1 flex-col">
            <DockTitle title="Capas" />
            <div className="flex h-[29px] shrink-0 items-center pb-1 pl-[3px]">
              <PanelButton label="Abrir panel de estilo">
                <g>
                  <path d="M14 11l8-9 2 2-7 9z" fill="#e0ab3c" stroke="#a87614" />
                  <path d="M1 8l4-1 9 2 3 4-7 10z" fill="#f6d23a" />
                  <path d="M1 8l3 5 11-1-1-3-9-2z" fill="#e0442c" />
                  <path d="M5 15l9-2 2 1-4 5z" fill="#f19530" />
                  <path d="M13 8l6 6" stroke="#5c82b0" strokeWidth="3" />
                </g>
              </PanelButton>
              <PanelButton label="Añadir grupo">
                <g>
                  <path d="M9 5h9v13H9zM5 9v13h10M1 12v11h9" stroke="#777" strokeWidth="1.500" />
                  <path d="M13 1v14M10 4l3-3 3 3" stroke="#3f6a99" strokeWidth="1.500" />
                  <PlusBadge />
                </g>
              </PanelButton>
              <PanelButton label="Gestionar temas del mapa">
                <g>
                  <path d="M1 11c6-9 16-9 22 0-6 9-16 9-22 0z" fill="#fff" stroke="#888" strokeWidth="1.300" />
                  <circle cx="12" cy="11" r="5" fill="#6c94bf" stroke="#35506f" />
                  <circle cx="12" cy="11" r="2" fill="#1d2f44" />
                  <path d="M17 20h7l-3.500 4z" fill="#555" />
                </g>
              </PanelButton>
              <PanelButton label="Filtrar leyenda">
                <g>
                  <Funnel />
                  <path d="M17 20h7l-3.500 4z" fill="#555" />
                </g>
              </PanelButton>
              <PanelButton label="Filtrar leyenda por expresión">
                <g>
                  <path d="M12 3C8-1 2 2 4 6c1 2 4 2 5 2C4 8 1 10 2 13c1 4 8 4 11 1" stroke="#8a4a8a" strokeWidth="2.400" />
                  <path d="M13 12h10l-2 3v8h-2v-6h-2v6h-2v-8z" fill="#aaa" stroke="#888" />
                </g>
              </PanelButton>
              <button aria-label="Más opciones" className="flex w-3 justify-center"><Arrow /></button>
              <PanelButton label="Expandir todo"><Tree up={false} /></PanelButton>
              <PanelButton label="Contraer todo"><Tree up /></PanelButton>
              <PanelButton label="Quitar capa">
                <g>
                  <path d="M1 1h18v18H1z" stroke="#777" strokeWidth="1.600" />
                  <rect x="13" y="15" width="11" height="8" rx="2" fill="#e5484d" />
                  <path d="M15 19h7" stroke="#fff" strokeWidth="2" />
                </g>
              </PanelButton>
            </div>
            <ul className="flex-1 border border-[#b4b4b4] bg-white font-semibold">
              <li className="flex h-[18px] items-center bg-[#0078d7] pl-[23px] text-white">
                <Check id="layer-2" />
                <svg width="16" height="16" className="ml-[6px]"><circle cx="8" cy="8" r="3" fill="#a8324a" stroke="#5c2a58" /></svg>
                <label htmlFor="layer-2" className="h-full flex-1 bg-[#1481dc] pl-[6px] leading-[18px] underline">CapaDeConsulta_2</label>
              </li>
              <li className="flex h-[18px] items-center pl-[23px]">
                <Check id="layer-1" />
                <span className="ml-[6px] size-4 border border-[#1a5079] bg-[#1f78b4]" />
                <label htmlFor="layer-1" className="pl-[6px]">CapaDeConsulta</label>
              </li>
            </ul>
          </section>
        </aside>
        <div className="flex w-[6px] shrink-0 items-center justify-center">
          <svg width="1" height="16"><path d="M.5 0v16" stroke="#aaa" strokeDasharray="1 2" /></svg>
        </div>
        <div className="min-w-0 flex-1 border-y border-l border-[#b4b4b4] bg-white">
          <MapCanvas />
        </div>
      </main>

      <footer className="flex h-7 shrink-0 items-center pl-1">
        <label className="flex h-[22px] w-[253px] items-center rounded-xs border border-[#b0b0b0] bg-white pl-2">
          <svg width="13" height="13" fill="none" stroke="#999" strokeWidth="1.400" aria-hidden="true">
            <circle cx="5" cy="5" r="4" />
            <path d="M8 8l4.500 4.500" />
          </svg>
          <input aria-label="Localizar" placeholder="Escriba para localizar (Ctrl+K)" className="w-0 flex-1 pl-[6px] outline-none placeholder:text-[#7c7c7c]" />
        </label>
        <div className="flex flex-1 items-center justify-end">
          <label htmlFor="coord" className="pr-[3px]">Coordenada</label>
          <input id="coord" defaultValue="451937 4083186" className="h-[22px] w-24 rounded-xs border border-[#b0b0b0] bg-white px-[3px] outline-none" />
          <button aria-label="Conmutar extensión" className="ml-[3px] flex w-4">
            <svg width="16" height="16" fill="none" stroke="#222">
              <ellipse cx="5" cy="5" rx="2.500" ry="4" transform="rotate(-40 5 5)" fill="#ddd" strokeWidth="1.300" />
              <ellipse cx="10" cy="11" rx="3" ry="4" transform="rotate(-40 10 11)" fill="#ddd" strokeWidth="1.300" />
              <path d="M2 8l5 6M7 6l5 5M9 6l5-4M4 4l3 3M9 10l3 3" />
              <path d="M11 8l3-3" />
            </svg>
          </button>
          <label htmlFor="scale" className="pr-[3px] pl-[10px]">Escala</label>
          <span className="relative flex h-[22px] w-[81px] rounded-xs border border-[#b0b0b0] bg-white">
            <select id="scale" className="w-full appearance-none pl-1 outline-none">
              <option>1:43098</option>
            </select>
            <span className="pointer-events-none absolute inset-y-0 right-0 flex w-5 items-center justify-center border-l border-[#c8c8c8] bg-[#f7f7f7]"><Arrow /></span>
          </span>
          <button aria-label="Bloquear escala" className="ml-[10px] flex">
            <svg width="14" height="16" fill="none">
              <path d="M3.500 8V5a3.500 3.500 0 0 1 7 0v3" stroke="#777" strokeWidth="1.800" />
              <rect x="1" y="7" width="12" height="8" rx="1" fill="#5e5e5e" />
            </svg>
          </button>
          <label htmlFor="mag" className="px-[3px]">Amplificador</label>
          <Spin id="mag" value="100%" />
          <label htmlFor="rot" className="pr-[5px] pl-[6px]">Rotación</label>
          <Spin id="rot" value="0,0 °" />
          <span className="pl-[6px]"><Check id="render" /></span>
          <label htmlFor="render" className="pl-[3px]">Representar</label>
          <button className="ml-3 flex items-center">
            <svg width="16" height="16" fill="none" stroke="#777" aria-hidden="true">
              <circle cx="8" cy="8" r="6.500" fill="#ccc" />
              <ellipse cx="8" cy="8" rx="3" ry="6.500" />
              <path d="M1 8h14M2.500 4.500h11M2.500 11.500h11M8 1v14" />
            </svg>
            <span>EPSG:25830</span>
          </button>
          <button aria-label="Mensajes" className="mr-[18px] ml-6 flex">
            <svg width="16" height="16">
              <path d="M8 1c4 0 7.500 2.500 7.500 6 0 2-1 3.500-3 4.500V15l-3.500-2.500C3.500 13 .5 10.500.5 7 .5 3.500 4 1 8 1z" fill="#555" />
              <path d="M4 6.500h2M7.200 6.500h2M10.400 6.500h2" stroke="#eee" strokeWidth="1.800" />
            </svg>
          </button>
          <svg width="10" height="10" className="mr-px self-end" aria-hidden="true">
            <path d="M8.500 0v10M5.500 3v7M2.500 6v4" stroke="#aaa" strokeDasharray="1 2" />
          </svg>
        </div>
      </footer>
    </div>
  );
}
